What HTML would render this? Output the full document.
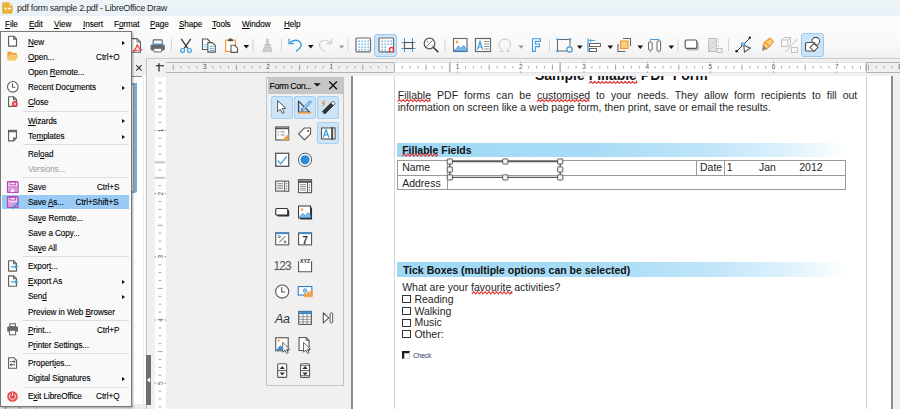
<!DOCTYPE html>
<html><head><meta charset="utf-8">
<style>
*{margin:0;padding:0;box-sizing:border-box}
html,body{width:900px;height:409px;overflow:hidden;background:#f0f0f0;font-family:"Liberation Sans",sans-serif;position:relative}
.a{position:absolute}
u{text-decoration:underline;text-underline-offset:0.8px;text-decoration-thickness:1px}
#title{left:0;top:0;width:900px;height:16px;background:linear-gradient(#edf4f8 0,#ecf3f8 70%,#e8f1f8 100%)}
#title .t{left:17px;top:1.9px;font-size:9px;letter-spacing:-0.3px;color:#2a2a2a;white-space:nowrap;line-height:12px}
#menubar{left:0;top:16px;width:900px;height:15px;background:#fcfcfb}
#menubar span{position:absolute;top:9px;font-size:9.6px;letter-spacing:-0.1px;transform:scaleX(0.85);transform-origin:0 0;color:#000;-webkit-text-stroke:0.12px #000;line-height:12px;white-space:nowrap}
#toolbar{left:0;top:31px;width:900px;height:27.6px;background:linear-gradient(#fbfbfb 0,#f8f8f8 55%,#f0f0f0 100%);border-bottom:1px solid #cbcbcb}
.sep{position:absolute;top:38px;width:1px;height:15px;background:#d4d4d4}
#ruler{left:166px;top:62px;width:734px;height:11px;background:#fff;border-top:1px solid #d8d8d8;border-bottom:1px solid #d8d8d8}
#page{left:351px;top:75px;width:541px;height:334px;background:#fff;border-left:2px solid #8a8a8a;border-right:2px solid #8a8a8a}
.doc{position:absolute;font-size:10.5px;color:#262626;white-space:nowrap;line-height:12px}
#menu{left:0;top:31px;width:132px;height:375.5px;background:#f9f9f9;border:1px solid #787878;box-shadow:1px 1px 2px rgba(0,0,0,0.35);z-index:20}
.mi{position:absolute;margin-top:0;left:26.9px;font-size:9.6px;letter-spacing:-0.1px;transform:scaleX(0.85);transform-origin:0 0;color:#000;-webkit-text-stroke:0.12px #000;white-space:nowrap;line-height:12px}
.mi.dis{color:#9a9a9a;-webkit-text-stroke:0}
.ms{position:absolute;margin-top:0;font-size:9.6px;letter-spacing:-0.1px;transform:scaleX(0.85);transform-origin:100% 0;color:#000;-webkit-text-stroke:0.12px #000;white-space:nowrap;line-height:12px;text-align:right;right:12px}
.msep{position:absolute;left:22px;width:106px;height:1px;background:#dcdcdc}
.arr{position:absolute;left:120.6px;width:0;height:0;border-left:3px solid #111;border-top:2.6px solid transparent;border-bottom:2.6px solid transparent;margin-top:2.4px}
#hl{left:1px;top:162.8px;width:127px;height:14.5px;background:#9acbf6}
#fc{left:266px;top:77px;width:78px;height:309px;background:#efefef;border:1px solid #c8c8c8}
</style></head><body>
<div id="title" class="a"><svg class="a" style="left:2px;top:2px" width="11" height="12" viewBox="0 0 11 12"><path d="M1.5 0.3h5.6l3.6 3.6v6.4a1.4 1.4 0 0 1-1.4 1.4h-7.8a1.4 1.4 0 0 1-1.4-1.4v-8.6a1.4 1.4 0 0 1 1.4-1.4z" fill="#e6b33a"/><path d="M7.1 0.3v2.6a1 1 0 0 0 1 1h2.6z" fill="#f2d27f"/><circle cx="3.6" cy="6.6" r="1.1" fill="#fff"/><path d="M5.5 6.6l1.4-1.2v2.4z" fill="#fff"/><rect x="7" y="5.9" width="1.8" height="1.4" fill="#fff"/></svg><div class="t a">pdf form sample 2.pdf - LibreOffice Draw</div></div>
<div id="menubar" class="a"><div class="a" style="left:0;top:0;width:23.5px;height:15px;background:#fdfdfd"></div>
<span style="left:5px;top:2px"><u>F</u>ile</span><span style="left:29px;top:2px"><u>E</u>dit</span><span style="left:54px;top:2px"><u>V</u>iew</span><span style="left:83px;top:2px"><u>I</u>nsert</span><span style="left:114px;top:2px">F<u>o</u>rmat</span><span style="left:150px;top:2px"><u>P</u>age</span><span style="left:179px;top:2px"><u>S</u>hape</span><span style="left:212px;top:2px"><u>T</u>ools</span><span style="left:242px;top:2px"><u>W</u>indow</span><span style="left:284px;top:2px"><u>H</u>elp</span>
</div>
<div id="toolbar" class="a"></div>
<div class="a" style="left:374px;top:33.5px;width:23px;height:23px;background:#cce4f7;border:1px solid #99c9ef;border-radius:3px"></div>
<div class="a" style="left:800.5px;top:33px;width:23.5px;height:23.5px;background:#cce4f7;border:1px solid #99c9ef;border-radius:3px"></div>
<svg class="a" style="left:0;top:31px" width="900" height="28" viewBox="0 31 900 28">
<!-- separators -->
<g fill="#d2d2d2"><rect x="171" y="39" width="1" height="12"/><rect x="252.5" y="39" width="1" height="12"/><rect x="281" y="39" width="1" height="12"/><rect x="347.5" y="39" width="1" height="12"/><rect x="444.5" y="39" width="1" height="12"/><rect x="549" y="39" width="1" height="12"/><rect x="677.5" y="39" width="1" height="12"/><rect x="728" y="39" width="1" height="12"/></g>
<!-- dropdown triangles -->
<g fill="#111"><path d="M243.5 45h5.6l-2.8 3.4z"/><path d="M308 45h5.6l-2.8 3.4z"/><path d="M577 45.5h5.6l-2.8 3.4z"/><path d="M607.5 45.5h5.6l-2.8 3.4z"/><path d="M637.5 45.5h5.6l-2.8 3.4z"/><path d="M668.5 45.5h5.6l-2.8 3.4z"/></g>
<g fill="#9a9a9a"><path d="M339 45.5h5.2l-2.6 3.2z"/><path d="M518.5 45.5h5.2l-2.6 3.2z"/></g>
<!-- pdf export (partially hidden) -->
<path d="M131 38.6h6l3.4 3.4v10.2h-9.4z" fill="#fff" stroke="#5a5a5a" stroke-width="1.1" stroke-linejoin="round"/>
<path d="M137 38.6v3.4h3.4" fill="none" stroke="#5a5a5a" stroke-width="0.9"/>
<path d="M137.3 44.5c-0.6 2.5-2 5-4.2 7M137.3 44.5c0.6 2.5 2 4.5 5 5.5M133.3 51.3c2.5-1 5.5-1.5 8.8-1.3" fill="none" stroke="#e84848" stroke-width="1.1"/>
<!-- print -->
<rect x="153.2" y="39.9" width="9" height="5.2" rx="0.8" fill="#fff" stroke="#666" stroke-width="1.1"/>
<rect x="150.6" y="44.6" width="14.2" height="5.8" rx="1.4" fill="#686868"/>
<rect x="153" y="43.6" width="9.4" height="1.4" fill="#3b95d9"/>
<rect x="153.8" y="48.3" width="7.8" height="3.6" rx="0.5" fill="#fff" stroke="#686868" stroke-width="1"/>
<!-- scissors -->
<path d="M181.2 38.8l6.6 9.6M190.8 38.8l-6.6 9.6" stroke="#3a3a3a" stroke-width="1.3" fill="none"/>
<circle cx="182.6" cy="50.4" r="1.9" fill="#fff" stroke="#3c9ad8" stroke-width="1.2"/><circle cx="189.4" cy="50.4" r="1.9" fill="#fff" stroke="#3c9ad8" stroke-width="1.2"/>
<!-- copy -->
<path d="M202.5 39h4.8l2.5 2.5v8h-7.3z" fill="#fff" stroke="#555" stroke-width="1.1" stroke-linejoin="round"/>
<path d="M207.8 42.6h4.6l2.9 2.9v6.6h-7.5z" fill="#fff" stroke="#555" stroke-width="1.1" stroke-linejoin="round"/>
<path d="M204.2 44.6h2.6M204.2 46.8h2.6M209.6 46.6h4.2M209.6 48.6h4.2M209.6 50.5h4.2" stroke="#3c9ad8" stroke-width="0.8"/>
<!-- paste -->
<rect x="225.6" y="40.2" width="9.8" height="11.2" fill="#fff" stroke="#f09a3a" stroke-width="1.2"/>
<path d="M228 41.2v-1.6l2.5-1.4 2.5 1.4v1.6z" fill="#555"/>
<path d="M231 45.2h3.6l2.9 2.9v4.3h-6.5z" fill="#fff" stroke="#555" stroke-width="1.1" stroke-linejoin="round"/>
<!-- clone brush disabled -->
<g fill="#c6c6c6"><rect x="266.2" y="38.4" width="2.6" height="5.6" rx="1"/><rect x="264.4" y="44" width="6.2" height="2.2"/><path d="M263.8 46.6h7.4l1.4 5.6h-10.2z"/></g>
<path d="M265.4 48v4M267.5 48v4M269.6 48v4" stroke="#e4e4e4" stroke-width="0.6"/>
<!-- undo -->
<path d="M290 42.8c3-3.2 8.5-3.5 10.5-0.2 1.8 3-0.5 6.2-4.5 8.8" fill="none" stroke="#3c9ad8" stroke-width="1.3"/>
<path d="M289 38.8v4.8h4.8" fill="none" stroke="#3c9ad8" stroke-width="1.3"/>
<!-- redo disabled -->
<path d="M330.5 42.8c-3-3.2-8.5-3.5-10.5-0.2-1.8 3 0.5 6.2 4.5 8.8" fill="none" stroke="#cfcfcf" stroke-width="1.2"/>
<path d="M331.5 38.8v4.8h-4.8" fill="none" stroke="#cfcfcf" stroke-width="1.2"/>
<!-- grid display -->
<rect x="356" y="38" width="14.5" height="13.8" rx="1" fill="#fff" stroke="#6a6a6a" stroke-width="1.2"/>
<g fill="#3c9ad8"><rect x="358.5" y="40.5" width="1.3" height="1.3"/><rect x="361.5" y="40.5" width="1.3" height="1.3"/><rect x="364.5" y="40.5" width="1.3" height="1.3"/><rect x="367.5" y="40.5" width="1.3" height="1.3"/>
<rect x="358.5" y="43.5" width="1.3" height="1.3"/><rect x="361.5" y="43.5" width="1.3" height="1.3"/><rect x="364.5" y="43.5" width="1.3" height="1.3"/><rect x="367.5" y="43.5" width="1.3" height="1.3"/>
<rect x="358.5" y="46.5" width="1.3" height="1.3"/><rect x="361.5" y="46.5" width="1.3" height="1.3"/><rect x="364.5" y="46.5" width="1.3" height="1.3"/><rect x="367.5" y="46.5" width="1.3" height="1.3"/>
<rect x="358.5" y="49.2" width="1.3" height="1.3"/><rect x="361.5" y="49.2" width="1.3" height="1.3"/><rect x="364.5" y="49.2" width="1.3" height="1.3"/><rect x="367.5" y="49.2" width="1.3" height="1.3"/></g>
<!-- snap grid -->
<rect x="379" y="38" width="14.5" height="13.8" rx="1" fill="#fff" stroke="#6a6a6a" stroke-width="1.2"/>
<g fill="#3c9ad8"><rect x="381.5" y="40.5" width="1.3" height="1.3"/><rect x="384.5" y="40.5" width="1.3" height="1.3"/><rect x="387.5" y="40.5" width="1.3" height="1.3"/><rect x="390.5" y="40.5" width="1.3" height="1.3"/>
<rect x="381.5" y="43.5" width="1.3" height="1.3"/><rect x="384.5" y="43.5" width="1.3" height="1.3"/><rect x="387.5" y="43.5" width="1.3" height="1.3"/><rect x="390.5" y="43.5" width="1.3" height="1.3"/>
<rect x="381.5" y="46.5" width="1.3" height="1.3"/><rect x="384.5" y="46.5" width="1.3" height="1.3"/>
<rect x="381.5" y="49.2" width="1.3" height="1.3"/><rect x="384.5" y="49.2" width="1.3" height="1.3"/></g>
<path d="M389.5 52.5v-3a2 2 0 0 1 4 0v3" fill="none" stroke="#e8383a" stroke-width="1.5"/>
<!-- helplines -->
<g stroke="#3c9ad8" stroke-width="1"><path d="M404.5 38v14M412.5 38v14M401.5 42.5h14M401.5 48.5h14"/></g>
<rect x="404.5" y="42.5" width="8" height="6" fill="none" stroke="#555" stroke-width="1.1"/>
<!-- zoom pan -->
<circle cx="429.5" cy="43.5" r="5.3" fill="#fff" stroke="#555" stroke-width="1.2"/>
<path d="M433.3 47.3l5 5" stroke="#333" stroke-width="1.5"/>
<path d="M426.5 46.5l6-6" stroke="#555" stroke-width="0.8"/>
<path d="M426.5 42l1.5-1.2 0.5 1.8zM431.5 45l1.5 0.5-1.2 1.2z" fill="#3c9ad8"/>
<!-- image -->
<rect x="453.5" y="38.5" width="13.5" height="13" fill="#fff" stroke="#666" stroke-width="1.1"/>
<circle cx="457" cy="42" r="1.4" fill="#f5a640"/>
<path d="M454 51l4.5-5 2.5 2.5 2.5-3 3.5 4v1.5z" fill="#7cbce8" stroke="#3a88cc" stroke-width="0.8"/>
<!-- text box -->
<rect x="475.5" y="38.5" width="15" height="13" fill="#fff" stroke="#666" stroke-width="1.2"/>
<path d="M477.5 49.5l2.5-8 2.5 8M478.4 47h3.2" fill="none" stroke="#3c9ad8" stroke-width="1.2"/>
<path d="M484 41.5h5M484 44h5M484 46.5h5M484 49h5" stroke="#777" stroke-width="0.8"/>
<!-- omega disabled -->
<path d="M500 51.5h2.5v-1.5c-2-1-3.5-3-3.5-5.3 0-3.3 2.5-5.7 5.8-5.7s5.8 2.4 5.8 5.7c0 2.3-1.5 4.3-3.5 5.3v1.5h2.5" fill="none" stroke="#c8c8c8" stroke-width="1"/>
<!-- fontwork F -->
<path d="M532.5 38.8h8v2.6h-5.2v2.6h4.2v2.6h-4.2v4.8h-2.8z" fill="#fff" stroke="#3c9ad8" stroke-width="1.1" stroke-linejoin="round"/>
<!-- transformations -->
<rect x="557.5" y="39.5" width="12.5" height="11.5" fill="none" stroke="#666" stroke-width="1"/>
<g fill="#4aa0dc"><circle cx="557.5" cy="39.5" r="1.3"/><circle cx="570" cy="39.5" r="1.3"/><circle cx="557.5" cy="51" r="1.3"/></g>
<circle cx="569.5" cy="49.5" r="2.7" fill="#f9f9f9" stroke="#3c9ad8" stroke-width="1.2"/>
<!-- align -->
<path d="M588 38.5v13.5" stroke="#3c9ad8" stroke-width="1.2"/>
<path d="M590 40.5h5M591 39l-1.5 1.5 1.5 1.5" stroke="#3c9ad8" stroke-width="0.9" fill="none"/>
<rect x="589.5" y="43.5" width="11" height="3" fill="#fff" stroke="#666" stroke-width="1"/>
<rect x="589.5" y="48.5" width="7" height="3" fill="#fff" stroke="#666" stroke-width="1"/>
<!-- arrange -->
<path d="M623 38.5h7.5v7.5" fill="none" stroke="#666" stroke-width="1.1"/>
<path d="M625.5 51.5h-7.5v-7.5" fill="none" stroke="#666" stroke-width="1.1"/>
<rect x="620.5" y="41" width="7.5" height="7.5" fill="#f9d07a" stroke="#f0953a" stroke-width="1.1"/>
<!-- distribute -->
<rect x="648.5" y="42" width="3.6" height="8" rx="0.8" fill="#fff" stroke="#666" stroke-width="1"/>
<rect x="657" y="41" width="3.6" height="10" rx="0.8" fill="#fff" stroke="#666" stroke-width="1"/>
<path d="M650.3 38.5v3M658.8 38.5v3M650.3 50v2.5M658.8 51v1.5" stroke="#3c9ad8" stroke-width="0.8"/>
<path d="M651 39.5h7.3" stroke="#3c9ad8" stroke-width="1"/>
<!-- shadow -->
<rect x="686.8" y="41.8" width="12" height="8.6" rx="1.5" fill="#b8b8b8"/>
<rect x="685.2" y="40" width="11.6" height="8.4" rx="1.4" fill="#fff" stroke="#555" stroke-width="1.1"/>
<!-- crop disabled -->
<rect x="708.5" y="38.5" width="8" height="13" fill="#e2e2e2" stroke="#c0c0c0" stroke-width="1"/>
<path d="M709 51l7-7M709 47l7-7" stroke="#c8c8c8" stroke-width="0.8"/>
<path d="M718.5 38.5v5M718.5 45v2" stroke="#c0c0c0" stroke-width="1" stroke-dasharray="1.2 1.2"/>
<rect x="717" y="48.5" width="5" height="4" fill="none" stroke="#c0c0c0" stroke-width="1"/>
<!-- points -->
<path d="M736.5 51.5l13-13" stroke="#333" stroke-width="1"/>
<circle cx="736.5" cy="51.3" r="1.2" fill="#222"/><circle cx="749.8" cy="37.8" r="1.2" fill="#222"/>
<path d="M743.8 45.2l6.5 3-5.8 3.8z" fill="#fff" stroke="#555" stroke-width="1.1"/>
<rect x="741.6" y="43" width="3" height="2.6" fill="#9ccdf0" stroke="#3c88d0" stroke-width="0.8"/>
<!-- glue pen -->
<path d="M765 42l5-4 3.5 3.5-4 5z" fill="#f9d37a" stroke="#f0953a" stroke-width="1.1"/>
<path d="M765 42l4.5 4.5-3 2.5-3.5-3.5z" fill="#f9d37a" stroke="#f0953a" stroke-width="1.1"/>
<path d="M763 45.5l3.5 3.5-4.5 2z" fill="#888"/>
<!-- 3d disabled -->
<g fill="none" stroke="#c2c2c2" stroke-width="1"><rect x="781.5" y="40" width="6.5" height="6.5"/><path d="M781.5 40l2.5-2.5h6.5v6.5l-2.5 2.5M788 40l2.5-2.5"/><path d="M785.5 52l12-13" stroke="#bdbdbd"/><rect x="791.5" y="47.5" width="6" height="5"/></g>
<!-- shapes -->
<circle cx="815.8" cy="41.2" r="3.8" fill="#fff" stroke="#555" stroke-width="1.1"/>
<rect x="805.5" y="42.5" width="9.5" height="8.5" rx="1" fill="#fff" stroke="#555" stroke-width="1.2"/>
<path d="M814 43.5l4 3.8-4 4-4-4z" fill="#fff" stroke="#555" stroke-width="1.1"/>
</svg>
<div class="a" style="left:0;top:58px;width:147px;height:351px;background:#fff"></div>
<div class="a" style="left:0;top:58px;width:146px;height:18.3px;background:#f0f0f0"></div>
<div class="a" style="left:0;top:76.2px;width:142.2px;height:1px;background:#8a8a8a"></div>
<div class="a" style="left:146px;top:58px;width:1.4px;height:351px;background:#c2c2c2"></div>
<div class="a" style="left:142.6px;top:77px;width:1px;height:332px;background:#ececec"></div>
<svg class="a" style="left:134px;top:63px" width="10" height="10" viewBox="0 0 10 10"><path d="M2.2 2.2l5.4 5.4M7.6 2.2l-5.4 5.4" stroke="#333" stroke-width="1.1"/></svg>
<div class="a" style="left:128px;top:83px;width:9px;height:110px;background:#78a8d6;border-radius:0 0 2px 0"></div>
<div class="a" style="left:128px;top:85px;width:5.5px;height:106px;background:#fff;border-right:1.2px solid #9a9a9a"></div>
<div class="a" style="left:146px;top:355px;width:4.7px;height:50px;background:#6e6e6e"></div>
<svg class="a" style="left:146px;top:376px" width="5" height="8" viewBox="0 0 5 8"><path d="M4.2 1.2v5.6l-3.4-2.8z" fill="#fff"/></svg>
<div class="a" style="left:0;top:404px;width:146px;height:5px;background:#ececec"></div>
<div class="a" style="left:5px;top:404px;width:1px;height:5px;background:#888"></div><div class="a" style="left:18.5px;top:404px;width:1px;height:5px;background:#999"></div><div class="a" style="left:35.5px;top:404px;width:1px;height:5px;background:#bbb"></div>
<div class="a" style="left:155px;top:76.5px;width:11px;height:333px;background:#fff"></div>
<div class="a" style="left:166px;top:61.6px;width:734px;height:11.2px;background:#fff;border-top:1px solid #e2e2e2;border-bottom:1px solid #e2e2e2"></div>
<div class="a" style="left:166px;top:61.6px;width:229px;height:11.2px;background:#efefef;border:1px solid #b4b4b4;border-left:none;border-radius:0 2.5px 2.5px 0"></div>
<div class="a" style="left:866px;top:61.6px;width:40px;height:11.2px;background:#efefef;border:1px solid #b4b4b4;border-right:none;border-radius:1px 0 0 1px"></div>
<svg class="a" style="left:154px;top:62px" width="12" height="12" viewBox="0 0 12 12"><path d="M1.8 3.7h8.2M5 1.2v8.3" stroke="#1a1a1a" stroke-width="1.15"/></svg>
<svg class="a" style="left:0;top:58px" width="900" height="20" viewBox="0 58 900 20"><g fill="#a2a2a2"><rect x="172.70" y="64.6" width="1" height="5.4"/><rect x="180.60" y="66.2" width="1" height="2.2"/><rect x="188.50" y="66.2" width="1" height="2.2"/><rect x="196.40" y="66.2" width="1" height="2.2"/><rect x="212.20" y="66.2" width="1" height="2.2"/><rect x="220.10" y="66.2" width="1" height="2.2"/><rect x="228.00" y="66.2" width="1" height="2.2"/><rect x="235.90" y="64.6" width="1" height="5.4"/><rect x="243.80" y="66.2" width="1" height="2.2"/><rect x="251.70" y="66.2" width="1" height="2.2"/><rect x="259.60" y="66.2" width="1" height="2.2"/><rect x="275.40" y="66.2" width="1" height="2.2"/><rect x="283.30" y="66.2" width="1" height="2.2"/><rect x="291.20" y="66.2" width="1" height="2.2"/><rect x="299.10" y="64.6" width="1" height="5.4"/><rect x="307.00" y="66.2" width="1" height="2.2"/><rect x="314.90" y="66.2" width="1" height="2.2"/><rect x="322.80" y="66.2" width="1" height="2.2"/><rect x="338.60" y="66.2" width="1" height="2.2"/><rect x="346.50" y="66.2" width="1" height="2.2"/><rect x="354.40" y="66.2" width="1" height="2.2"/><rect x="362.30" y="64.6" width="1" height="5.4"/><rect x="370.20" y="66.2" width="1" height="2.2"/><rect x="378.10" y="66.2" width="1" height="2.2"/><rect x="386.00" y="66.2" width="1" height="2.2"/><rect x="401.80" y="66.2" width="1" height="2.2"/><rect x="409.70" y="66.2" width="1" height="2.2"/><rect x="417.60" y="66.2" width="1" height="2.2"/><rect x="425.50" y="64.6" width="1" height="5.4"/><rect x="433.40" y="66.2" width="1" height="2.2"/><rect x="441.30" y="66.2" width="1" height="2.2"/><rect x="449.20" y="66.2" width="1" height="2.2"/><rect x="465.00" y="66.2" width="1" height="2.2"/><rect x="472.90" y="66.2" width="1" height="2.2"/><rect x="480.80" y="66.2" width="1" height="2.2"/><rect x="488.70" y="64.6" width="1" height="5.4"/><rect x="496.60" y="66.2" width="1" height="2.2"/><rect x="504.50" y="66.2" width="1" height="2.2"/><rect x="512.40" y="66.2" width="1" height="2.2"/><rect x="528.20" y="66.2" width="1" height="2.2"/><rect x="536.10" y="66.2" width="1" height="2.2"/><rect x="544.00" y="66.2" width="1" height="2.2"/><rect x="551.90" y="64.6" width="1" height="5.4"/><rect x="559.80" y="66.2" width="1" height="2.2"/><rect x="567.70" y="66.2" width="1" height="2.2"/><rect x="575.60" y="66.2" width="1" height="2.2"/><rect x="591.40" y="66.2" width="1" height="2.2"/><rect x="599.30" y="66.2" width="1" height="2.2"/><rect x="607.20" y="66.2" width="1" height="2.2"/><rect x="615.10" y="64.6" width="1" height="5.4"/><rect x="623.00" y="66.2" width="1" height="2.2"/><rect x="630.90" y="66.2" width="1" height="2.2"/><rect x="638.80" y="66.2" width="1" height="2.2"/><rect x="654.60" y="66.2" width="1" height="2.2"/><rect x="662.50" y="66.2" width="1" height="2.2"/><rect x="670.40" y="66.2" width="1" height="2.2"/><rect x="678.30" y="64.6" width="1" height="5.4"/><rect x="686.20" y="66.2" width="1" height="2.2"/><rect x="694.10" y="66.2" width="1" height="2.2"/><rect x="702.00" y="66.2" width="1" height="2.2"/><rect x="717.80" y="66.2" width="1" height="2.2"/><rect x="725.70" y="66.2" width="1" height="2.2"/><rect x="733.60" y="66.2" width="1" height="2.2"/><rect x="741.50" y="64.6" width="1" height="5.4"/><rect x="749.40" y="66.2" width="1" height="2.2"/><rect x="757.30" y="66.2" width="1" height="2.2"/><rect x="765.20" y="66.2" width="1" height="2.2"/><rect x="781.00" y="66.2" width="1" height="2.2"/><rect x="788.90" y="66.2" width="1" height="2.2"/><rect x="796.80" y="66.2" width="1" height="2.2"/><rect x="804.70" y="64.6" width="1" height="5.4"/><rect x="812.60" y="66.2" width="1" height="2.2"/><rect x="820.50" y="66.2" width="1" height="2.2"/><rect x="828.40" y="66.2" width="1" height="2.2"/><rect x="844.20" y="66.2" width="1" height="2.2"/><rect x="852.10" y="66.2" width="1" height="2.2"/><rect x="860.00" y="66.2" width="1" height="2.2"/><rect x="867.90" y="64.6" width="1" height="5.4"/><rect x="875.80" y="66.2" width="1" height="2.2"/><rect x="883.70" y="66.2" width="1" height="2.2"/><rect x="891.60" y="66.2" width="1" height="2.2"/></g><g fill="#999"><rect x="204.30" y="61.8" width="1" height="1.4"/><rect x="204.30" y="71.4" width="1" height="1.4"/><rect x="267.50" y="61.8" width="1" height="1.4"/><rect x="267.50" y="71.4" width="1" height="1.4"/><rect x="330.70" y="61.8" width="1" height="1.4"/><rect x="330.70" y="71.4" width="1" height="1.4"/><rect x="457.10" y="61.8" width="1" height="1.4"/><rect x="457.10" y="71.4" width="1" height="1.4"/><rect x="520.30" y="61.8" width="1" height="1.4"/><rect x="520.30" y="71.4" width="1" height="1.4"/><rect x="583.50" y="61.8" width="1" height="1.4"/><rect x="583.50" y="71.4" width="1" height="1.4"/><rect x="646.70" y="61.8" width="1" height="1.4"/><rect x="646.70" y="71.4" width="1" height="1.4"/><rect x="709.90" y="61.8" width="1" height="1.4"/><rect x="709.90" y="71.4" width="1" height="1.4"/><rect x="773.10" y="61.8" width="1" height="1.4"/><rect x="773.10" y="71.4" width="1" height="1.4"/><rect x="836.30" y="61.8" width="1" height="1.4"/><rect x="836.30" y="71.4" width="1" height="1.4"/><rect x="899.50" y="61.8" width="1" height="1.4"/><rect x="899.50" y="71.4" width="1" height="1.4"/></g><g font-family="Liberation Sans" font-size="6.4" fill="#555" text-anchor="middle"><text x="204.80" y="69.4">3</text><text x="268.00" y="69.4">2</text><text x="331.20" y="69.4">1</text><text x="457.60" y="69.4">1</text><text x="520.80" y="69.4">2</text><text x="584.00" y="69.4">3</text><text x="647.20" y="69.4">4</text><text x="710.40" y="69.4">5</text><text x="773.60" y="69.4">6</text><text x="836.80" y="69.4">7</text><text x="900.00" y="69.4">8</text></g><rect x="448.9" y="62.5" width="1.8" height="9.8" fill="#bdbdbd"/><rect x="559.3" y="62.5" width="1.8" height="9.8" fill="#bdbdbd"/><rect x="865.5" y="63.5" width="1.4" height="7.5" fill="#aaa"/></svg>
<svg class="a" style="left:150px;top:0" width="20" height="409" viewBox="150 0 20 409"><g fill="#a6a6a6"><rect x="158.6" y="82.50" width="2.6" height="1"/><rect x="158.6" y="90.40" width="2.6" height="1"/><rect x="157.6" y="98.30" width="5" height="1"/><rect x="158.6" y="106.20" width="2.6" height="1"/><rect x="158.6" y="114.10" width="2.6" height="1"/><rect x="158.6" y="122.00" width="2.6" height="1"/><rect x="158.6" y="137.80" width="2.6" height="1"/><rect x="158.6" y="145.70" width="2.6" height="1"/><rect x="158.6" y="153.60" width="2.6" height="1"/><rect x="157.6" y="161.50" width="5" height="1"/><rect x="158.6" y="169.40" width="2.6" height="1"/><rect x="158.6" y="177.30" width="2.6" height="1"/><rect x="158.6" y="185.20" width="2.6" height="1"/><rect x="158.6" y="201.00" width="2.6" height="1"/><rect x="158.6" y="208.90" width="2.6" height="1"/><rect x="158.6" y="216.80" width="2.6" height="1"/><rect x="157.6" y="224.70" width="5" height="1"/><rect x="158.6" y="232.60" width="2.6" height="1"/><rect x="158.6" y="240.50" width="2.6" height="1"/><rect x="158.6" y="248.40" width="2.6" height="1"/><rect x="158.6" y="264.20" width="2.6" height="1"/><rect x="158.6" y="272.10" width="2.6" height="1"/><rect x="158.6" y="280.00" width="2.6" height="1"/><rect x="157.6" y="287.90" width="5" height="1"/><rect x="158.6" y="295.80" width="2.6" height="1"/><rect x="158.6" y="303.70" width="2.6" height="1"/><rect x="158.6" y="311.60" width="2.6" height="1"/><rect x="158.6" y="327.40" width="2.6" height="1"/><rect x="158.6" y="335.30" width="2.6" height="1"/><rect x="158.6" y="343.20" width="2.6" height="1"/><rect x="157.6" y="351.10" width="5" height="1"/><rect x="158.6" y="359.00" width="2.6" height="1"/><rect x="158.6" y="366.90" width="2.6" height="1"/><rect x="158.6" y="374.80" width="2.6" height="1"/><rect x="158.6" y="390.60" width="2.6" height="1"/><rect x="158.6" y="398.50" width="2.6" height="1"/><rect x="158.6" y="406.40" width="2.6" height="1"/></g><g fill="#999"><rect x="154.6" y="129.90" width="1.6" height="1"/><rect x="164.6" y="129.90" width="1.6" height="1"/><rect x="154.6" y="193.10" width="1.6" height="1"/><rect x="164.6" y="193.10" width="1.6" height="1"/><rect x="154.6" y="256.30" width="1.6" height="1"/><rect x="164.6" y="256.30" width="1.6" height="1"/><rect x="154.6" y="319.50" width="1.6" height="1"/><rect x="164.6" y="319.50" width="1.6" height="1"/><rect x="154.6" y="382.70" width="1.6" height="1"/><rect x="164.6" y="382.70" width="1.6" height="1"/></g><g font-family="Liberation Sans" font-size="6.4" fill="#555" text-anchor="middle"><text transform="translate(160.5 130.40) rotate(-90)" y="2.3">1</text><text transform="translate(160.5 193.60) rotate(-90)" y="2.3">2</text><text transform="translate(160.5 256.80) rotate(-90)" y="2.3">3</text><text transform="translate(160.5 320.00) rotate(-90)" y="2.3">4</text><text transform="translate(160.5 383.20) rotate(-90)" y="2.3">5</text></g><rect x="154.8" y="161.4" width="10.4" height="2" fill="#c8c8c8"/><rect x="154.8" y="176.8" width="10.4" height="2" fill="#c8c8c8"/></svg>
<div class="a" style="left:350.5px;top:75px;width:2.4px;height:334px;background:#8c8c8c"></div>
<div class="a" style="left:352.9px;top:75px;width:538px;height:334px;background:#fff"></div>
<div class="a" style="left:890.6px;top:75px;width:2.2px;height:334px;background:#8c8c8c"></div>
<div class="a" style="left:394.2px;top:75px;width:1px;height:334px;background:#d4d4d4"></div>
<div class="a" style="left:865.8px;top:75px;width:1px;height:334px;background:#d4d4d4"></div>
<div class="a" style="left:352.9px;top:75px;width:538px;height:334px;overflow:hidden">
 <div class="doc" style="left:182.1px;top:-7.6px;font-size:14px;font-weight:bold;line-height:16px;color:#111">Sample Fillable PDF Form</div>
 <div class="doc" style="left:44.9px;top:13.5px;width:459.5px;text-align:justify;text-align-last:justify">Fillable PDF forms can be customised to your needs. They allow form recipients to fill out</div>
 <div class="doc" style="left:44.9px;top:25.8px">information on screen like a web page form, then print, save or email the results.</div>
 <div class="a" style="left:43.8px;top:67.9px;width:445px;height:14px;background:linear-gradient(90deg,#9fd8f5 0,#a8dcf6 45%,#bfe5f9 70%,#dff2fc 88%,#fcfeff 100%)"></div>
 <div class="doc" style="left:49.3px;top:68.8px;font-weight:bold;color:#111">Fillable Fields</div>
 <div class="a" style="left:44.4px;top:84.8px;width:448.5px;height:30.6px;border:1px solid #999"></div>
 <div class="a" style="left:44.4px;top:100.3px;width:448.5px;height:1px;background:#999"></div>
 <div class="a" style="left:93.8px;top:84.8px;width:1px;height:30.6px;background:#999"></div>
 <div class="a" style="left:342.7px;top:84.8px;width:1px;height:15.5px;background:#999"></div>
 <div class="a" style="left:371.1px;top:84.8px;width:1px;height:15.5px;background:#999"></div>
 <div class="doc" style="left:49.3px;top:86.2px">Name</div>
 <div class="doc" style="left:49.3px;top:101.8px">Address</div>
 <div class="doc" style="left:347.1px;top:86.2px">Date</div>
 <div class="doc" style="left:373.8px;top:86.2px">1</div>
 <div class="doc" style="left:406px;top:86.2px">Jan</div>
 <div class="doc" style="left:446.4px;top:86.2px">2012</div>
 <div class="a" style="left:43.8px;top:187.4px;width:445px;height:14.5px;background:linear-gradient(90deg,#9fd8f5 0,#a8dcf6 45%,#bfe5f9 70%,#dff2fc 88%,#fcfeff 100%)"></div>
 <div class="doc" style="left:50px;top:188.8px;font-weight:bold;color:#111">Tick Boxes (multiple options can be selected)</div>
 <div class="doc" style="left:49.3px;top:206.4px">What are your favourite activities?</div>
 <div class="doc" style="left:61.5px;top:218.1px">Reading</div>
 <div class="doc" style="left:61.5px;top:229.8px">Walking</div>
 <div class="doc" style="left:61.5px;top:241.3px">Music</div>
 <div class="doc" style="left:61.5px;top:252.9px">Other:</div>
 <div class="a" style="left:49.5px;top:220.3px;width:8.6px;height:8.2px;border:1.3px solid #333"></div>
 <div class="a" style="left:49.5px;top:232.1px;width:8.6px;height:8.2px;border:1.3px solid #333"></div>
 <div class="a" style="left:49.5px;top:243.7px;width:8.6px;height:8.2px;border:1.3px solid #333"></div>
 <div class="a" style="left:49.5px;top:255.3px;width:8.6px;height:8.2px;border:1.3px solid #333"></div>
 <div class="a" style="left:48.9px;top:276.1px;width:8px;height:7.6px;border-left:2px solid #1a1a1a;border-top:2px solid #1a1a1a;border-right:1px solid #d4d4d4;border-bottom:1px solid #d4d4d4;box-shadow:inset 1px 1px 0 #bdbdbd"></div>
 <div class="doc" style="left:60px;top:277px;font-size:6.8px;line-height:8px;color:#2c3a70;letter-spacing:-0.2px">Check</div>
</div>
<div class="a" style="left:166px;top:72.8px;width:734px;height:3.2px;background:#f0f0f0"></div>
<svg class="a" style="left:0;top:0" width="900" height="409" viewBox="0 0 900 409">
<g fill="none" stroke="#e23a3a" stroke-width="1.1"><path d="M397.50 101.70L399.40 99.50L401.30 101.70L403.20 99.50L405.10 101.70L407.00 99.50L408.90 101.70L410.80 99.50L412.70 101.70L414.60 99.50L416.50 101.70L418.40 99.50L420.30 101.70L422.20 99.50L424.10 101.70L426.00 99.50L427.90 101.70L429.80 99.50L430.30 101.70"/><path d="M536.70 101.70L538.60 99.50L540.50 101.70L542.40 99.50L544.30 101.70L546.20 99.50L548.10 101.70L550.00 99.50L551.90 101.70L553.80 99.50L555.70 101.70L557.60 99.50L559.50 101.70L561.40 99.50L563.30 101.70L565.20 99.50L567.10 101.70L569.00 99.50L570.90 101.70L572.80 99.50L574.70 101.70L576.60 99.50L578.50 101.70L580.40 99.50L582.30 101.70L584.20 99.50L586.10 101.70L588.00 99.50L589.30 101.70"/><path d="M589.00 83.50L590.90 81.30L592.80 83.50L594.70 81.30L596.60 83.50L598.50 81.30L600.40 83.50L602.30 81.30L604.20 83.50L606.10 81.30L608.00 83.50L609.90 81.30L611.80 83.50L613.70 81.30L615.60 83.50L617.50 81.30L619.40 83.50L621.30 81.30L623.20 83.50L625.10 81.30L627.00 83.50L628.90 81.30L630.80 83.50L632.70 81.30L634.60 83.50L636.50 81.30L636.70 83.50"/><path d="M402.20 156.10L404.10 153.90L406.00 156.10L407.90 153.90L409.80 156.10L411.70 153.90L413.60 156.10L415.50 153.90L417.40 156.10L419.30 153.90L421.20 156.10L423.10 153.90L425.00 156.10L426.90 153.90L428.80 156.10L430.70 153.90L432.60 156.10L434.50 153.90L436.40 156.10L437.80 153.90"/><path d="M471.80 293.90L473.70 291.70L475.60 293.90L477.50 291.70L479.40 293.90L481.30 291.70L483.20 293.90L485.10 291.70L487.00 293.90L488.90 291.70L490.80 293.90L492.70 291.70L494.60 293.90L496.50 291.70L498.40 293.90L500.30 291.70L502.20 293.90L504.10 291.70L506.00 293.90L507.90 291.70L509.80 293.90L511.70 291.70L511.80 293.90"/></g>
<path d="M449.8 161.5h110.4M449.8 177.4h110.4M449.8 161.5v15.9M560.2 161.5v15.9" stroke="#5a5a5a" stroke-width="1.3" fill="none"/>
<g fill="#f4f4f4" stroke="#4a4a4a" stroke-width="0.9"><rect x="447.20" y="158.90" width="5.2" height="5.2" rx="0.6"/><rect x="502.70" y="158.90" width="5.2" height="5.2" rx="0.6"/><rect x="557.60" y="158.90" width="5.2" height="5.2" rx="0.6"/><rect x="447.20" y="166.90" width="5.2" height="5.2" rx="0.6"/><rect x="557.60" y="166.90" width="5.2" height="5.2" rx="0.6"/><rect x="447.20" y="174.80" width="5.2" height="5.2" rx="0.6"/><rect x="502.70" y="174.80" width="5.2" height="5.2" rx="0.6"/><rect x="557.60" y="174.80" width="5.2" height="5.2" rx="0.6"/></g>
</svg>
<div class="a" style="left:266px;top:77px;width:77.5px;height:308.5px;background:#f0f0f0;border:1px solid #c4c4c4"></div>
<div class="a" style="left:267.5px;top:78px;width:75px;height:16px;background:#c6c6c6"></div>
<div class="a" style="left:269.6px;top:81px;font-size:8.8px;letter-spacing:-0.45px;line-height:10px;color:#000;-webkit-text-stroke:0.12px #000;white-space:nowrap">Form Con...</div>
<div class="a" style="left:270.8px;top:95.7px;width:22.6px;height:22.9px;background:#cce4f7;border:1px solid #a6d0f2;border-radius:2px"></div>
<div class="a" style="left:293.9px;top:95.7px;width:22.6px;height:22.9px;background:#cce4f7;border:1px solid #a6d0f2;border-radius:2px"></div>
<div class="a" style="left:316.9px;top:95.7px;width:22.6px;height:22.9px;background:#cce4f7;border:1px solid #a6d0f2;border-radius:2px"></div>
<div class="a" style="left:316.9px;top:121.6px;width:22.6px;height:22.9px;background:#cce4f7;border:1px solid #a6d0f2;border-radius:2px"></div>
<svg class="a" style="left:260px;top:74px;z-index:5" width="90" height="315" viewBox="260 74 90 315"><path d="M313.6 83.2h7.2l-3.6 3.4z" fill="#111"/><path d="M329.3 81.6l7.6 7.6M336.9 81.6l-7.6 7.6" stroke="#111" stroke-width="1.4"/><path d="M277.59999999999997 100.6v11.2l2.6-2.6 2.2 4.2 1.9-1 -2.2-4h3.8z" fill="#fff" stroke="#555" stroke-width="1" stroke-linejoin="round"/><path d="M298.55 101.1v11h11z" fill="none" stroke="#444" stroke-width="1.3" stroke-linejoin="round"/><path d="M301.05 108.1v2.5h2.5z" fill="#444"/><path d="M298.25 112.69999999999999h13" stroke="#f0953a" stroke-width="1.6"/><path d="M302.05 108.6l8-8 1.6 1.6-8 8-2 0.5z" fill="#9ccdf0" stroke="#3a8ad0" stroke-width="0.8"/><path d="M322.3 111.6l8.5-8.5 2.5 2.5-8.5 8.5z" fill="#333" stroke="#333" stroke-width="0.8"/><path d="M330.8 103.1l2-2 2.5 2.5-2 2z" fill="#fff" stroke="#333" stroke-width="0.8"/><path d="M324.8 100.3l-2.5 3h2.5l-2 3" fill="none" stroke="#f0953a" stroke-width="1.1"/><rect x="275.7" y="126.94999999999999" width="13" height="13" fill="#fff" stroke="#555" stroke-width="1.1"/><path d="M275.7 128.45h13" stroke="#555" stroke-width="1.6"/><path d="M277.7 131.95h1.5M280.7 131.95h4M277.7 134.95h1.5M280.7 134.95h4" stroke="#777" stroke-width="0.9"/><path d="M288.7 133.45v6.5h-6.5z" fill="#f2a048"/><path d="M298.55 133.95l6-6h6v6l-6 6z" fill="#fff" stroke="#555" stroke-width="1.1" stroke-linejoin="round"/><circle cx="308.05" cy="130.95" r="1" fill="#555"/><rect x="321.5" y="127.94999999999999" width="13.6" height="11" fill="#fff" stroke="#555" stroke-width="1.1"/><path d="M332.1 126.94999999999999v13" stroke="#555" stroke-width="2.2"/><path d="M323.3 137.45l2.8-8 2.8 8M324.3 134.95h3.6" fill="none" stroke="#3c9ad8" stroke-width="1.2"/><rect x="275.7" y="153.3" width="13" height="13" fill="#fff" stroke="#555" stroke-width="1.3"/><path d="M277.7 160.3l3 3.5 6-7.5" fill="none" stroke="#3c9ad8" stroke-width="1.3"/><circle cx="305.05" cy="159.8" r="6.6" fill="#fff" stroke="#555" stroke-width="1"/><circle cx="305.05" cy="159.8" r="4.6" fill="#2f8ad6"/><rect x="275.7" y="181.15" width="13" height="10" fill="#fff" stroke="#555" stroke-width="1.1"/><path d="M284.7 181.15v10" stroke="#555" stroke-width="1"/><path d="M277.2 183.65h6M277.2 185.35h6M277.2 187.05h6M277.2 188.75h6" stroke="#777" stroke-width="0.8"/><path d="M286.7 183.15v1M286.7 185.65v1M286.7 188.15v1" stroke="#333" stroke-width="1"/><rect x="298.55" y="179.65" width="13" height="13" fill="#fff" stroke="#555" stroke-width="1.1"/><path d="M298.55 181.65h13" stroke="#555" stroke-width="2.4"/><path d="M307.55 182.65v10" stroke="#555" stroke-width="1"/><path d="M300.05 184.65h6M300.05 186.45000000000002h6M300.05 188.25h6M300.05 190.05h6" stroke="#777" stroke-width="0.8"/><path d="M309.55 184.65v1M309.55 187.15v1M309.55 189.65v1" stroke="#333" stroke-width="1"/><rect x="277.2" y="210.0" width="12" height="6.5" rx="1" fill="#333"/><rect x="275.7" y="208.5" width="12" height="6.5" rx="1" fill="#fff" stroke="#333" stroke-width="1.1"/><rect x="300.05" y="207.5" width="12" height="12" fill="#333"/><rect x="298.55" y="206.0" width="12" height="12" fill="#fff" stroke="#333" stroke-width="1"/><circle cx="302.05" cy="209.5" r="1.3" fill="#f5a640"/><path d="M299.05 217.5l3.5-4 2.5 2 3-3 2.5 3v2z" fill="#7cbce8" stroke="#3a88cc" stroke-width="0.7"/><rect x="275.7" y="232.85" width="13" height="12" fill="#fff" stroke="#555" stroke-width="1.1"/><path d="M275.7 233.35h13" stroke="#3c8fd6" stroke-width="1.6"/><path d="M279.2 242.35l6-6" stroke="#444" stroke-width="1"/><circle cx="279.4" cy="236.65" r="1" fill="none" stroke="#444" stroke-width="0.8"/><circle cx="285.0" cy="241.85" r="1" fill="none" stroke="#444" stroke-width="0.8"/><rect x="298.55" y="232.85" width="13" height="12" fill="#fff" stroke="#555" stroke-width="1.1"/><path d="M298.55 233.35h13" stroke="#3c8fd6" stroke-width="1.6"/><text x="305.05" y="243.65" font-family="Liberation Sans" font-weight="bold" font-size="10" fill="#333" text-anchor="middle">7</text><text x="282.2" y="269.70000000000005" font-family="Liberation Sans" font-size="12" letter-spacing="-0.8" fill="#555" text-anchor="middle">123</text><path d="M298.55 261.20000000000005v10.5h13v-10.5" fill="#fff" stroke="#555" stroke-width="1.1"/><text x="305.05" y="263.20000000000005" font-family="Liberation Sans" font-weight="bold" font-size="5.2" fill="#333" text-anchor="middle">XYZ</text><circle cx="282.2" cy="291.55" r="6.6" fill="#fff" stroke="#555" stroke-width="1.1"/><path d="M281.7 287.05v5h3.5" fill="none" stroke="#555" stroke-width="1.1"/><rect x="298.25" y="286.55" width="13.6" height="8.5" fill="#fff" stroke="#2f7fd0" stroke-width="1.1"/><circle cx="305.05" cy="290.55" r="1.8" fill="#9ccdf0" stroke="#2f7fd0" stroke-width="0.7"/><g fill="#f2a048"><rect x="304.05" y="293.05" width="2.6" height="4.5" rx="1"/><rect x="307.05" y="291.55" width="2.6" height="6" rx="1"/><rect x="310.05" y="290.55" width="2.6" height="7" rx="1"/></g><text x="282.2" y="322.5" font-family="Liberation Sans" font-style="italic" font-size="12.5" fill="#333" text-anchor="middle" letter-spacing="-0.5">Aa</text><rect x="298.75" y="311.4" width="12.6" height="13" fill="#fff" stroke="#555" stroke-width="1.1"/><rect x="298.75" y="311.4" width="12.6" height="2.8" fill="#3c8fd6"/><path d="M298.75 316.7h12.6M298.75 319.29999999999995h12.6M298.75 321.9h12.6M303.05 311.9v12.5M307.05 311.9v12.5" stroke="#777" stroke-width="0.8"/><path d="M323.3 312.9v10l5.5-5z" fill="#fff" stroke="#555" stroke-width="1.1" stroke-linejoin="round"/><rect x="330.1" y="312.9" width="2.6" height="10" rx="1" fill="#fff" stroke="#555" stroke-width="1"/><rect x="275.7" y="337.75" width="12.5" height="13" fill="#fff" stroke="#555" stroke-width="1.1"/><circle cx="278.7" cy="340.75" r="1.2" fill="#f5a640"/><path d="M276.2 350.25l4-5 2 2v3z" fill="#3c8fd6"/><path d="M282.7 342.25v10l2.2-2.2 1.8 3.4 1.5-0.8-1.8-3.3h3.2z" fill="#fff" stroke="#555" stroke-width="0.9" stroke-linejoin="round"/><path d="M299.05 337.45h7l3 3v10h-10z" fill="#fff" stroke="#555" stroke-width="1.1" stroke-linejoin="round"/><path d="M306.05 337.45v3h3" fill="none" stroke="#555" stroke-width="0.9"/><path d="M303.55 342.25v10l2.2-2.2 1.8 3.4 1.5-0.8-1.8-3.3h3.2z" fill="#fff" stroke="#555" stroke-width="0.9" stroke-linejoin="round"/><rect x="277.7" y="363.8" width="9" height="13.6" rx="1" fill="#fff" stroke="#555" stroke-width="1.1"/><path d="M277.7 370.6h9" stroke="#555" stroke-width="1"/><path d="M279.59999999999997 369.0l2.6-3 2.6 3z M279.59999999999997 372.40000000000003l2.6 3 2.6-3z" fill="#333"/><rect x="300.55" y="363.8" width="9" height="13.6" rx="1" fill="#fff" stroke="#555" stroke-width="1.1"/><path d="M300.55 370.6h9" stroke="#555" stroke-width="1"/><path d="M302.25 369.0l2.8-3 2.8 3z M302.25 372.40000000000003l2.8 3 2.8-3z" fill="#333"/><path d="M300.55 365.6h9M300.55 375.6h9" stroke="#555" stroke-width="0.8"/></svg>
<div id="menu" class="a"><div id="hl" class="a"></div>
<div class="mi" style="top:3.6px"><u>N</u>ew</div>
<div class="arr" style="top:6.2px"></div>
<div class="mi" style="top:18.8px"><u>O</u>pen...</div>
<div class="ms" style="top:18.8px">Ctrl+O</div>
<div class="mi" style="top:33.9px">Open <u>R</u>emote...</div>
<div class="mi" style="top:49.1px">Recent Doc<u>u</u>ments</div>
<div class="arr" style="top:51.7px"></div>
<div class="mi" style="top:64.3px"><u>C</u>lose</div>
<div class="msep" style="top:78.6px"></div>
<div class="mi" style="top:82.5px"><u>W</u>izards</div>
<div class="arr" style="top:85.1px"></div>
<div class="mi" style="top:97.6px">Te<u>m</u>plates</div>
<div class="arr" style="top:100.2px"></div>
<div class="msep" style="top:111.9px"></div>
<div class="mi" style="top:115.8px">Rel<u>o</u>ad</div>
<div class="mi dis" style="top:131.0px">Versions...</div>
<div class="msep" style="top:145.3px"></div>
<div class="mi" style="top:149.1px"><u>S</u>ave</div>
<div class="ms" style="top:149.1px">Ctrl+S</div>
<div class="mi" style="top:164.3px">Save <u>A</u>s...</div>
<div class="ms" style="top:164.3px">Ctrl+Shift+S</div>
<div class="mi" style="top:179.5px">Sa<u>v</u>e Remote...</div>
<div class="mi" style="top:194.6px">Save a Cop<u>y</u>...</div>
<div class="mi" style="top:209.8px">Sa<u>v</u>e All</div>
<div class="msep" style="top:224.1px"></div>
<div class="mi" style="top:228.0px">Expor<u>t</u>...</div>
<div class="mi" style="top:243.1px"><u>E</u>xport As</div>
<div class="arr" style="top:245.7px"></div>
<div class="mi" style="top:258.3px">Sen<u>d</u></div>
<div class="arr" style="top:260.9px"></div>
<div class="mi" style="top:273.5px">Preview in Web <u>B</u>rowser</div>
<div class="msep" style="top:287.8px"></div>
<div class="mi" style="top:291.7px"><u>P</u>rint...</div>
<div class="ms" style="top:291.7px">Ctrl+P</div>
<div class="mi" style="top:306.8px">P<u>r</u>inter Settings...</div>
<div class="msep" style="top:321.1px"></div>
<div class="mi" style="top:325.0px">Propert<u>i</u>es...</div>
<div class="mi" style="top:340.2px">Di<u>g</u>ital Signatures</div>
<div class="arr" style="top:342.8px"></div>
<div class="msep" style="top:354.5px"></div>
<div class="mi" style="top:358.3px">E<u>x</u>it LibreOffice</div>
<div class="ms" style="top:358.3px">Ctrl+Q</div>
</div>
<svg class="a" style="left:0;top:0;z-index:21" width="140" height="409" viewBox="0 0 140 409">
<g fill="none" stroke="#5a5a5a" stroke-width="1.1" stroke-linejoin="round">
<!-- New -->
<path d="M8.6 36.2h5.2l2.7 2.7v7.2h-7.9z" fill="#fff"/><path d="M13.6 36.2v2.9h2.9"/>
<!-- Clock -->
<circle cx="12.8" cy="86.8" r="5.3" fill="#fff"/><path d="M12.5 83.4v3.8h2.8"/>
<!-- Close doc -->
<path d="M8.6 96.8h5.2l2.7 2.7v6.9h-7.9z" fill="#fff"/><path d="M13.6 96.8v2.9h2.9"/>
<!-- Templates -->
<path d="M8.6 130.3h7.8v7.8l-2.8 2.8h-5z" fill="#fff"/><path d="M8.6 131.4h7.8" stroke-width="1.6"/><path d="M13.6 140.9v-2.8h2.8"/>
<!-- Export -->
<path d="M8.6 260.8h5.2l2.7 2.7v7.6h-7.9z" fill="#fff"/><path d="M13.6 260.8v2.9h2.9"/>
<path d="M8.6 275.9h5.2l2.7 2.7v7.6h-7.9z" fill="#fff"/><path d="M13.6 275.9v2.9h2.9"/>
<!-- Properties -->
<path d="M8.6 357.8h5.4l2.6 2.6v7.8h-8z" fill="#fff"/>
</g>
<g stroke="#3c9ad8" stroke-width="1.2" fill="none"><path d="M10.8 266.8h6.2M15.4 265.2l1.8 1.6-1.8 1.6"/><path d="M10.8 281.9h6.2M15.4 280.3l1.8 1.6-1.8 1.6"/></g>
<g stroke="#444" stroke-width="0.9" fill="none"><path d="M10.2 361.6h5M13.6 360.3l1.6 1.3-1.6 1.3M15 364.8h-5M11.6 363.5l-1.6 1.3 1.6 1.3"/></g>
<!-- Open folder -->
<path d="M7.4 52h3.6l1.1 1.2h4.3v2h-6.5l-2.5 5.2z" fill="#f2a547"/>
<path d="M7.4 60.4l2.4-5.2h8.4l-2.3 5.2z" fill="#f8c563"/>
<path d="M7.4 52h3.6l1.1 1.2h4.3v2" fill="none" stroke="#e8923a" stroke-width="0.6"/>
<!-- Close red x -->
<circle cx="14.8" cy="104" r="2.9" fill="#e8333a"/><path d="M13.6 102.8l2.4 2.4M16 102.8l-2.4 2.4" stroke="#fff" stroke-width="0.9"/>
<!-- Save -->
<g>
<path d="M7.6 181.6h9.4l1 1v9.6h-10.4z" fill="#fff" stroke="#b44bb8" stroke-width="1.4" stroke-linejoin="round"/>
<rect x="10" y="182.2" width="5.6" height="2.6" fill="#fff" stroke="#b44bb8" stroke-width="1"/>
<path d="M8.2 186.4h9.2" stroke="#c879c8" stroke-width="0.9"/>
<rect x="8.3" y="187" width="9" height="4.8" fill="#d99ad9"/>
<rect x="11.2" y="189.5" width="2.8" height="2.5" fill="#fff"/>
</g>
<g>
<path d="M7.6 196.8h9.4l1 1v9.6h-10.4z" fill="#f2d8f2" stroke="#b44bb8" stroke-width="1.4" stroke-linejoin="round"/>
<rect x="10" y="197.4" width="5.6" height="2.6" fill="#fff" stroke="#b44bb8" stroke-width="1"/>
<rect x="8.3" y="202.2" width="9" height="4.8" fill="#d99ad9"/>
<path d="M12.2 207.6l5.6-5.6 1.2 1.2-5.6 5.6h-1.2z" fill="#3c8fd6"/>
</g>
<!-- Print -->
<g fill="#666">
<path d="M9.8 323.8h5.6v3h-5.6z" fill="none" stroke="#666" stroke-width="1.1"/>
<rect x="7.2" y="326.6" width="10.8" height="5.2" rx="1"/>
<rect x="9.6" y="330.2" width="6" height="4.6" fill="#fff" stroke="#666" stroke-width="1"/>
</g>
<!-- Exit -->
<circle cx="12.5" cy="396.5" r="5.3" fill="#e54c50"/>
<path d="M10.6 394.2a3 3 0 1 0 3.8 0M12.5 392.6v3.4" stroke="#fff" stroke-width="0.9" fill="none"/>
</svg>
</body></html>
